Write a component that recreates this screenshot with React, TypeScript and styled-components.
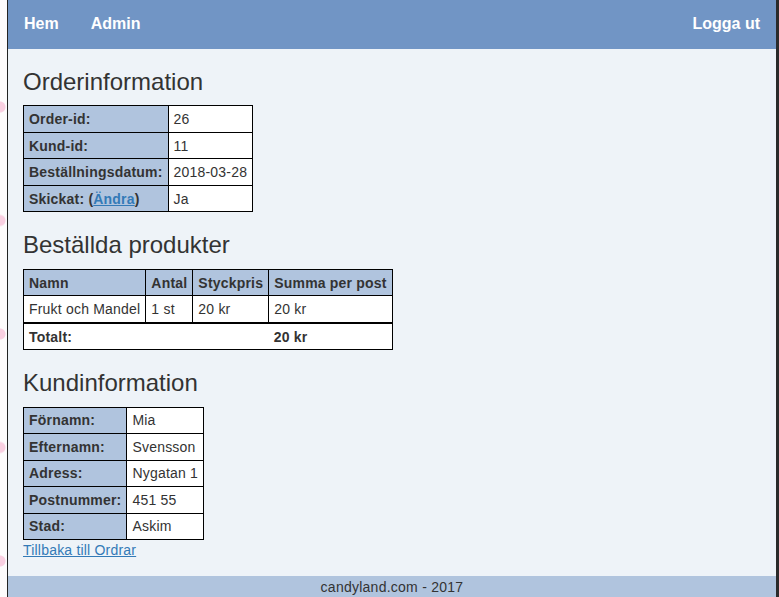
import styled, { createGlobalStyle } from 'styled-components'

const GlobalStyle = createGlobalStyle`
  html, body {
    margin: 0;
    padding: 0;
  }
  body {
    font-family: 'Liberation Sans', Arial, sans-serif;
    font-size: 14px;
    line-height: 20px;
    color: #333;
    background-color: #fdfbfc;
    background-image: radial-gradient(circle at 0px 10px, #f9cfe1 5px, transparent 6px);
    background-size: 20px 113.5px;
    background-repeat: repeat-y;
    background-position: 0 97px;
  }
`

const Page = styled.div`
  margin-left: 7px;
  border-left: 1px solid #222;
  border-right: 3px solid #2a2a2a;
  background: #eef3f8;
  min-height: 100vh;
  display: flex;
  flex-direction: column;
`

const Nav = styled.nav`
  height: 48px;
  background: #7195c5;
  display: flex;
  align-items: center;
  padding: 0 0 1px;
`

const NavLink = styled.a<{ $right?: boolean }>`
  color: #fff;
  font-weight: bold;
  font-size: 16px;
  text-decoration: none;
  padding: 0 16px;
  margin-left: ${(p) => (p.$right ? 'auto' : '0')};
`

const Main = styled.main`
  padding: 0 15px 16px;
  flex: 1;
  letter-spacing: 0.2px;
`

const Heading = styled.h2`
  font-size: 24px;
  font-weight: normal;
  line-height: 1.1;
  margin: 20px 0 10px;
  color: #333;
  letter-spacing: 0;
`

const Table = styled.table`
  border-collapse: collapse;
  background: #fff;
`

const Th = styled.th`
  background: #b0c4de;
  border: 1px solid #000;
  text-align: left;
  font-weight: bold;
  padding: 2.75px 5px;
  white-space: nowrap;
`

const Td = styled.td<{ $bold?: boolean }>`
  border: 1px solid #000;
  padding: 2.75px 5px;
  font-weight: ${(p) => (p.$bold ? 'bold' : 'normal')};
  white-space: nowrap;
`

const TotalRow = styled.tr`
  border-top: 2px solid #000;
`

const TotalCell = styled(Td)`
  border-left: 1px solid #000;
  border-right: none;
`

const TotalValue = styled(Td)`
  border-left: none;
`

const Link = styled.a`
  color: #337ab7;
  text-decoration: underline;
`

const Footer = styled.footer`
  background: #b0c4de;
  text-align: center;
  padding: 1px 0 2px;
  color: #333;
  letter-spacing: 0.25px;
`

const order = [
  ['Order-id:', '26'],
  ['Kund-id:', '11'],
  ['Beställningsdatum:', '2018-03-28'],
]

const customer = [
  ['Förnamn:', 'Mia'],
  ['Efternamn:', 'Svensson'],
  ['Adress:', 'Nygatan 1'],
  ['Postnummer:', '451 55'],
  ['Stad:', 'Askim'],
]

export default function App() {
  return (
    <>
      <GlobalStyle />
      <Page>
        <Nav>
          <NavLink href="#">Hem</NavLink>
          <NavLink href="#">Admin</NavLink>
          <NavLink href="#" $right>
            Logga ut
          </NavLink>
        </Nav>
        <Main>
          <Heading>Orderinformation</Heading>
          <Table>
            <tbody>
              {order.map(([label, value]) => (
                <tr key={label}>
                  <Th>{label}</Th>
                  <Td>{value}</Td>
                </tr>
              ))}
              <tr>
                <Th>
                  Skickat: (<Link href="#">Ändra</Link>)
                </Th>
                <Td>Ja</Td>
              </tr>
            </tbody>
          </Table>

          <Heading>Beställda produkter</Heading>
          <Table>
            <thead>
              <tr>
                <Th>Namn</Th>
                <Th>Antal</Th>
                <Th>Styckpris</Th>
                <Th>Summa per post</Th>
              </tr>
            </thead>
            <tbody>
              <tr>
                <Td>Frukt och Mandel</Td>
                <Td>1 st</Td>
                <Td>20 kr</Td>
                <Td>20 kr</Td>
              </tr>
              <TotalRow>
                <TotalCell $bold colSpan={3}>
                  Totalt:
                </TotalCell>
                <TotalValue $bold>20 kr</TotalValue>
              </TotalRow>
            </tbody>
          </Table>

          <Heading>Kundinformation</Heading>
          <Table>
            <tbody>
              {customer.map(([label, value]) => (
                <tr key={label}>
                  <Th>{label}</Th>
                  <Td>{value}</Td>
                </tr>
              ))}
            </tbody>
          </Table>
          <Link href="#">Tillbaka till Ordrar</Link>
        </Main>
        <Footer>candyland.com - 2017</Footer>
      </Page>
    </>
  )
}
